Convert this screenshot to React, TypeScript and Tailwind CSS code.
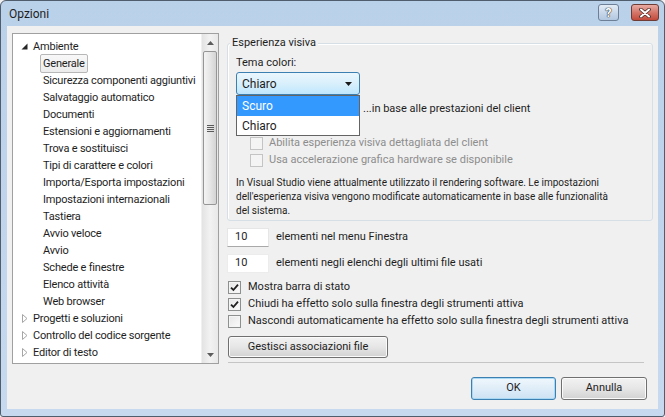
import React from "react";

type TreeItem = { t: string; lvl: 0 | 1; exp?: boolean; sel?: boolean };

const tree: TreeItem[] = [
  { t: "Ambiente", lvl: 0, exp: true },
  { t: "Generale", lvl: 1, sel: true },
  { t: "Sicurezza componenti aggiuntivi", lvl: 1 },
  { t: "Salvataggio automatico", lvl: 1 },
  { t: "Documenti", lvl: 1 },
  { t: "Estensioni e aggiornamenti", lvl: 1 },
  { t: "Trova e sostituisci", lvl: 1 },
  { t: "Tipi di carattere e colori", lvl: 1 },
  { t: "Importa/Esporta impostazioni", lvl: 1 },
  { t: "Impostazioni internazionali", lvl: 1 },
  { t: "Tastiera", lvl: 1 },
  { t: "Avvio veloce", lvl: 1 },
  { t: "Avvio", lvl: 1 },
  { t: "Schede e finestre", lvl: 1 },
  { t: "Elenco attività", lvl: 1 },
  { t: "Web browser", lvl: 1 },
  { t: "Progetti e soluzioni", lvl: 0, exp: false },
  { t: "Controllo del codice sorgente", lvl: 0, exp: false },
  { t: "Editor di testo", lvl: 0, exp: false },
];

function Expander({ open }: { open: boolean }) {
  return open ? (
    <svg width="7" height="7" viewBox="0 0 7 7" className="block">
      <polygon points="6.5,0.5 6.5,6.5 0.5,6.5" fill="#262626" />
    </svg>
  ) : (
    <svg width="6" height="9" viewBox="0 0 6 9" className="block">
      <polygon points="0.5,0.5 5,4.5 0.5,8.5" fill="#ffffff" stroke="#a6a6a6" strokeWidth="1" />
    </svg>
  );
}

function CheckMark() {
  return (
    <svg width="9" height="9" viewBox="0 0 9 9" className="block">
      <path d="M1 4.6 L3.4 7 L8 1.6" stroke="#202020" strokeWidth="1.8" fill="none" />
    </svg>
  );
}

function CheckBox({ checked, disabled }: { checked?: boolean; disabled?: boolean }) {
  return disabled ? (
    <span className="w-[13px] h-[13px] shrink-0 border border-[#c4c4c4] bg-[#f4f4f4] flex items-center justify-center" />
  ) : (
    <span className="w-[13px] h-[13px] shrink-0 border border-[#8e8f8f] bg-gradient-to-br from-[#e6e6e6] to-[#fbfbfb] shadow-[inset_0_0_0_1px_#f4f4f4] flex items-center justify-center">
      {checked ? <CheckMark /> : null}
    </span>
  );
}

function TriDown({ color }: { color: string }) {
  return (
    <svg width="7" height="4" viewBox="0 0 7 4" className="block">
      <polygon points="0,0 7,0 3.5,4" fill={color} />
    </svg>
  );
}

function TriUp({ color }: { color: string }) {
  return (
    <svg width="7" height="4" viewBox="0 0 7 4" className="block">
      <polygon points="0,4 7,4 3.5,0" fill={color} />
    </svg>
  );
}

export default function App() {
  return (
    <div className="w-[665px] h-[417px] bg-[#f0f0f0]">
      <div className="w-[665px] h-[417px] flex flex-col border border-[#4f5d6d] rounded-t-[6px] rounded-b-[3px] bg-gradient-to-b from-[#bad1ea] to-[#c6d9ef] font-['Roboto',sans-serif] text-[11px] text-[#1e1e1e] overflow-hidden">
        {/* Title bar */}
        <div className="h-[25px] shrink-0 flex items-start">
          <span className="pl-[8px] pt-[5px] text-[12px] leading-[16px] text-[#1e1e1e]">Opzioni</span>
          <div className="ml-auto mt-[3px] mr-[5px] flex items-start gap-[12px]">
            <div className="w-[21px] h-[17px] rounded-[3px] border border-[#6c7f96] bg-gradient-to-b from-[#e3ecf6] via-[#c9d8ea] to-[#b2c7df] flex items-center justify-center">
              <span className="text-[12px] leading-[12px] font-bold text-white [text-shadow:0_0_1px_#3a3a3a,0_0_1px_#3a3a3a,0_0_1px_#3a3a3a]">?</span>
            </div>
            <div className="w-[28px] h-[17px] rounded-[3px] border border-[#6e3b35] bg-gradient-to-b from-[#e8aba3] via-[#d4766a] to-[#c3493b] flex items-center justify-center">
              <svg width="12" height="10" viewBox="0 0 12 10" className="block">
                <path d="M2 1.5 L10 8.5 M10 1.5 L2 8.5" stroke="#4a2a26" strokeWidth="3.6" strokeLinecap="round" />
                <path d="M2 1.5 L10 8.5 M10 1.5 L2 8.5" stroke="#ffffff" strokeWidth="2" strokeLinecap="round" />
              </svg>
            </div>
          </div>
        </div>

        {/* Client area */}
        <div className="flex-1 mx-[6px] mb-[7px] bg-[#f0f0f0] flex flex-col">
          <div className="flex pt-[7px] pl-[5px]">
            {/* Tree */}
            <div className="w-[207px] h-[331px] border border-[#a0a0a0] bg-white flex">
              <div className="flex-1 min-w-0 pt-[4px] flex flex-col overflow-hidden tracking-[-0.2px]">
                {tree.map((it) => (
                  <div key={it.t} className="h-[17px] flex items-center whitespace-nowrap">
                    {it.lvl === 0 ? (
                      <>
                        <span className="w-[7px] ml-[8px] flex items-center justify-center">
                          <Expander open={!!it.exp} />
                        </span>
                        <span className="ml-[5px] leading-[17px]">{it.t}</span>
                      </>
                    ) : it.sel ? (
                      <span className="ml-[27px] h-[19px] px-[2px] border border-[#b7b7b7] rounded-[2px] bg-gradient-to-b from-[#f8f8f8] to-[#ececec] leading-[17px]">
                        {it.t}
                      </span>
                    ) : (
                      <span className="ml-[30px] leading-[17px]">{it.t}</span>
                    )}
                  </div>
                ))}
              </div>
              {/* Scrollbar */}
              <div className="w-[17px] h-full shrink-0 bg-gradient-to-r from-[#e3e3e3] via-[#f2f2f2] to-[#e8e8e8] border-l border-[#f0f0f0] flex flex-col items-stretch">
                <div className="h-[17px] flex items-center justify-center">
                  <TriUp color="#5c5c5c" />
                </div>
                <div className="h-[154px] mx-[1px] border border-[#969696] rounded-[2px] bg-gradient-to-r from-[#f4f4f4] via-[#e6e6e6] to-[#d4d4d4] flex flex-col items-center justify-center gap-[1px]">
                  <span className="w-[7px] h-[1px] bg-[#5a5a5a]" />
                  <span className="w-[7px] h-[1px] bg-[#5a5a5a]" />
                  <span className="w-[7px] h-[1px] bg-[#5a5a5a]" />
                  <span className="w-[7px] h-[1px] bg-[#5a5a5a]" />
                </div>
                <div className="flex-1" />
                <div className="h-[17px] flex items-center justify-center">
                  <TriDown color="#5c5c5c" />
                </div>
              </div>
            </div>

            {/* Right column */}
            <div className="ml-[8px] w-[426px] flex flex-col">
              {/* Group box */}
              <div className="mt-[10px] h-[178px] relative border border-[#d5dfe5] rounded-[3px] shadow-[inset_1px_1px_0_#ffffff] pl-[8px] flex flex-col">
                <span className="absolute left-[2px] top-[-9px] px-[2px] bg-[#f0f0f0] leading-[16px]">Esperienza visiva</span>
                <div className="mt-[11px] h-[16px] leading-[16px]">Tema colori:</div>
                <div className="mt-[1px] relative w-[124px] h-[23px]">
                  <div className="w-[124px] h-[23px] border border-[#3c7fb1] rounded-[3px] bg-gradient-to-b from-[#eaf6fd] via-[#d9f0fc] to-[#bee6fd] flex items-center pl-[5px] pr-[7px]">
                    <span className="leading-[16px] text-[12px] text-[#1e1e1e]">Chiaro</span>
                    <span className="ml-auto">
                      <TriDown color="#1a1a1a" />
                    </span>
                  </div>
                  <div className="absolute left-0 top-[23px] w-[124px] h-[41px] border border-[#646464] bg-white flex flex-col z-10">
                    <div className="h-[20px] bg-[#3399ff] text-white pl-[5px] flex items-center text-[12px]">Scuro</div>
                    <div className="h-[19px] pl-[5px] flex items-center text-[12px]">Chiaro</div>
                  </div>
                </div>
                <div className="mt-[6px] h-[16px] pl-[127px] leading-[16px] whitespace-nowrap">
                  ...in base alle prestazioni del client
                </div>
                <div className="mt-[18px] h-[17px] pl-[14px] flex items-center gap-[6px] text-[#8d8d8d] whitespace-nowrap">
                  <CheckBox disabled />
                  <span>Abilita esperienza visiva dettagliata del client</span>
                </div>
                <div className="h-[17px] pl-[14px] flex items-center gap-[6px] text-[#8d8d8d] whitespace-nowrap">
                  <CheckBox disabled />
                  <span>Usa accelerazione grafica hardware se disponibile</span>
                </div>
                <div className="mt-[7px] text-[10px] leading-[14px] whitespace-nowrap">
                  <div>In Visual Studio viene attualmente utilizzato il rendering software. Le impostazioni</div>
                  <div>dell'esperienza visiva vengono modificate automaticamente in base alle funzionalità</div>
                  <div>del sistema.</div>
                </div>
              </div>

              {/* Number inputs */}
              <div className="mt-[7px] h-[19px] flex items-center">
                <div className="w-[42px] h-[19px] bg-white border border-[#e6e6e6] border-b-[#a9a9a9] pl-[7px] flex items-center">10</div>
                <span className="ml-[7px]">elementi nel menu Finestra</span>
              </div>
              <div className="mt-[7px] h-[19px] flex items-center">
                <div className="w-[42px] h-[19px] bg-white border border-[#ececec] pl-[7px] flex items-center">10</div>
                <span className="ml-[7px]">elementi negli elenchi degli ultimi file usati</span>
              </div>

              {/* Checkboxes */}
              <div className="mt-[6px] h-[17px] pl-[1px] flex items-center gap-[7px] whitespace-nowrap">
                <CheckBox checked />
                <span>Mostra barra di stato</span>
              </div>
              <div className="h-[17px] pl-[1px] flex items-center gap-[7px] whitespace-nowrap">
                <CheckBox checked />
                <span>Chiudi ha effetto solo sulla finestra degli strumenti attiva</span>
              </div>
              <div className="h-[17px] pl-[1px] flex items-center gap-[7px] whitespace-nowrap">
                <CheckBox />
                <span>Nascondi automaticamente ha effetto solo sulla finestra degli strumenti attiva</span>
              </div>

              <div className="mt-[6px] ml-[1px] w-[160px] h-[22px] border border-[#707070] rounded-[3px] bg-gradient-to-b from-[#f2f2f2] via-[#e6e6e6] to-[#d2d2d2] shadow-[inset_0_0_0_1px_#fbfbfb] flex items-center justify-center">
                Gestisci associazioni file
              </div>

              <div className="mt-[4px] ml-[1px] w-[416px] h-[1px] bg-[#c5c5c5]" />
            </div>
          </div>

          {/* Bottom buttons */}
          <div className="mt-[13px] flex justify-end pr-[11px] gap-[5px]">
            <div className="w-[85px] h-[23px] border border-[#3c7fb1] rounded-[3px] bg-gradient-to-b from-[#f0f7fc] via-[#dfedf8] to-[#cde2f3] shadow-[inset_0_0_0_1px_#a9d8f5] flex items-center justify-center">
              OK
            </div>
            <div className="w-[86px] h-[23px] border border-[#707070] rounded-[3px] bg-gradient-to-b from-[#f2f2f2] via-[#e6e6e6] to-[#d2d2d2] shadow-[inset_0_0_0_1px_#fbfbfb] flex items-center justify-center">
              Annulla
            </div>
          </div>
        </div>
      </div>
    </div>
  );
}
